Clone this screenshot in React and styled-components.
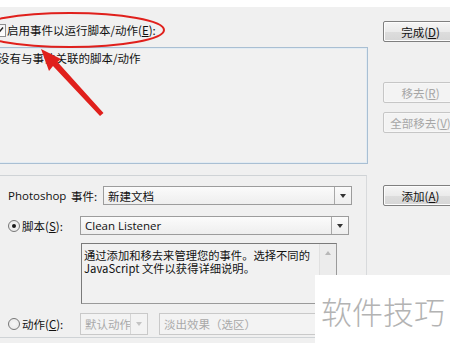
import React from "react";
import styled, { createGlobalStyle } from "styled-components";

const Global = createGlobalStyle`
  html, body { margin: 0; padding: 0; background: #f0f0f0; }
  body { overflow: hidden; }
  * { box-sizing: border-box; }
`;

const FONT = `"Noto Sans CJK SC", "Noto Sans", sans-serif`;
const LATIN = `"Open Sans", "Noto Sans CJK SC", sans-serif`;

const Page = styled.div`
  position: relative;
  width: 450px;
  height: 343px;
  overflow: hidden;
  background: #f0f0f0;
  font-family: ${FONT};
  font-size: 11.5px;
  color: #111;
`;

const TopBand = styled.div`
  height: 7px;
  background: #ffffff;
`;

const Dialog = styled.div`
  display: flex;
  gap: 15px;
  margin-left: -12px;
`;

const LeftCol = styled.div`
  width: 380px;
  flex: none;
  display: flex;
  flex-direction: column;
`;

const CheckRow = styled.label`
  display: flex;
  align-items: center;
  gap: 1px;
  height: 14px;
  margin-top: 16px;
  padding-left: 5px;
  line-height: 14px;
`;

const CheckBoxBox = styled.span`
  width: 13px;
  height: 13px;
  border: 1px solid #8e8f8f;
  background: linear-gradient(#f4f4f4, #ffffff);
  display: flex;
  align-items: center;
  justify-content: center;
`;

const U = styled.span`
  text-decoration: underline;
`;

const ListBox = styled.div`
  margin-top: 10px;
  height: 117px;
  border: 1px solid #a9bfd3;
  box-shadow: inset 0 0 0 1px #e3ecf3;
  background: #f1f1f1;
  padding: 3px 9px;
  line-height: 14px;
  white-space: nowrap;
`;

const GroupBox = styled.div`
  margin-top: 11px;
  margin-right: 1px;
  height: 163px;
  border: 1px solid #cfd3d6;
  border-right-color: #d8dadc;
  padding: 10px 0 0 19px;
  display: flex;
  flex-direction: column;
`;

const FormRow = styled.div`
  display: flex;
  align-items: center;
  height: ${(p) => p.$h || 19}px;
  margin-top: ${(p) => p.$mt || 0}px;
`;

const Label = styled.div`
  width: ${(p) => p.$w}px;
  flex: none;
  display: flex;
  align-items: center;
  gap: 2px;
  font-size: 11.5px;
  line-height: 14px;
  white-space: nowrap;
`;

const LatinWord = styled.span`
  font-family: ${LATIN};
  font-size: 11.5px;
`;

const Radio = styled.span`
  width: 12px;
  height: 12px;
  border-radius: 50%;
  border: 1px solid #777;
  background: radial-gradient(circle, #f6f6f6 0, #e6e6e6 100%);
  display: flex;
  align-items: center;
  justify-content: center;
  &::after {
    content: "";
    width: 4px;
    height: 4px;
    border-radius: 50%;
    background: ${(p) => (p.$on ? "#1a1a1a" : "transparent")};
  }
`;

const SelectBox = styled.div`
  width: ${(p) => p.$w}px;
  height: 100%;
  flex: none;
  display: flex;
  border: 1px solid ${(p) => (p.$disabled ? "#c9c9c9" : "#9c9c9c")};
  background: ${(p) =>
    p.$disabled ? "#f3f3f3" : "linear-gradient(#fbfbfb, #eeeeee)"};
  margin-left: ${(p) => p.$ml || 0}px;
  color: ${(p) => (p.$disabled ? "#a9a9a9" : "#111")};
`;

const SelectText = styled.div`
  flex: 1;
  padding-left: 4px;
  display: flex;
  align-items: center;
  white-space: nowrap;
  overflow: hidden;
  font-family: ${(p) => (p.$latin ? LATIN : FONT)};
  font-size: 11.5px;
`;

const SelectArrow = styled.div`
  width: 17px;
  flex: none;
  border-left: 1px solid ${(p) => (p.$disabled ? "#d5d5d5" : "#a8a8a8")};
  display: flex;
  align-items: center;
  justify-content: center;
  &::after {
    content: "";
    border-left: 3.5px solid transparent;
    border-right: 3.5px solid transparent;
    border-top: 4px solid ${(p) => (p.$disabled ? "#c4c4c4" : "#333")};
  }
`;

const TextArea = styled.div`
  margin-top: 8px;
  margin-left: 73px;
  width: 256px;
  height: 61px;
  border: 1px solid #7a7a7a;
  border-right-color: #9a9a9a;
  border-bottom-color: #9a9a9a;
  background: #f1f1f1;
  display: flex;
`;

const TAText = styled.div`
  flex: 1;
  padding: 5px 0 0 2px;
  font-size: 11.3px;
  line-height: 13px;
  color: #111;
  white-space: nowrap;
  overflow: hidden;
`;

const ScrollBar = styled.div`
  width: 17px;
  flex: none;
  background: #ececec;
  border-left: 1px solid #e0e0e0;
  display: flex;
  flex-direction: column;
`;

const ScrollBtn = styled.div`
  height: 17px;
  display: flex;
  align-items: center;
  justify-content: center;
  &::after {
    content: "";
    border-left: 3.5px solid transparent;
    border-right: 3.5px solid transparent;
    border-bottom: 4px solid #b8b8b8;
  }
`;

const RightCol = styled.div`
  width: 75px;
  flex: none;
  display: flex;
  flex-direction: column;
`;

const Button = styled.div`
  height: 21px;
  margin-top: ${(p) => p.$mt}px;
  border: 1px solid ${(p) => (p.$disabled ? "#c6c6c6" : "#7f7f7f")};
  border-radius: 2px;
  box-shadow: inset 0 0 0 1px ${(p) => (p.$disabled ? "#f7f7f7" : "#fcfcfc")};
  background: ${(p) =>
    p.$disabled
      ? "#f3f3f3"
      : "linear-gradient(#f5f5f5 0%, #ebebeb 50%, #dddddd 51%, #d6d6d6 100%)"};
  color: ${(p) => (p.$disabled ? "#a6a6a6" : "#111")};
  display: flex;
  align-items: center;
  justify-content: center;
  font-size: 11.5px;
  white-space: nowrap;
`;

const Overlay = styled.svg`
  position: absolute;
  left: 0;
  top: 0;
  width: 450px;
  height: 343px;
  pointer-events: none;
`;

const Watermark = styled.div`
  position: absolute;
  left: 315px;
  top: 275px;
  width: 135px;
  height: 68px;
  background: #ffffff;
  display: flex;
  align-items: center;
  padding-left: 6px;
  padding-top: 2px;
  font-weight: 300;
  font-size: 31px;
  color: #b3b3b3;
  white-space: nowrap;
`;

function Select({ w, text, disabled, latin, ml }) {
  return (
    <SelectBox $w={w} $disabled={disabled} $ml={ml}>
      <SelectText $latin={latin}>{text}</SelectText>
      <SelectArrow $disabled={disabled} />
    </SelectBox>
  );
}

export default function App() {
  return (
    <Page>
      <Global />
      <TopBand />
      <Dialog>
        <LeftCol>
          <CheckRow>
            <CheckBoxBox>
              <svg width="9" height="9" viewBox="0 0 9 9">
                <path d="M1 4.5 L3.5 7 L8 1.5" fill="none" stroke="#222" strokeWidth="1.4" />
              </svg>
            </CheckBoxBox>
            <span>
              启用事件以运行脚本/动作(<U>E</U>):
            </span>
          </CheckRow>
          <ListBox>没有与事件关联的脚本/动作</ListBox>
          <GroupBox>
            <FormRow>
              <Label $w={95}>
                <LatinWord>Photoshop</LatinWord>
                <span>&nbsp;事件:</span>
              </Label>
              <Select w={249} text="新建文档" />
            </FormRow>
            <FormRow $mt={11}>
              <Label $w={72}>
                <Radio $on />
                <span>
                  脚本(<U>S</U>):
                </span>
              </Label>
              <Select w={269} text="Clean Listener" latin />
            </FormRow>
            <TextArea>
              <TAText>
                通过添加和移去来管理您的事件。选择不同的
                <br />
                JavaScript 文件以获得详细说明。
              </TAText>
              <ScrollBar>
                <ScrollBtn />
              </ScrollBar>
            </TextArea>
            <FormRow $mt={9} $h={22}>
              <Label $w={72}>
                <Radio />
                <span>
                  动作(<U>C</U>):
                </span>
              </Label>
              <Select w={68} text="默认动作" disabled />
              <Select w={190} text="淡出效果（选区）" disabled ml={11} />
            </FormRow>
          </GroupBox>
        </LeftCol>
        <RightCol>
          <Button $mt={14}>
            完成(<U>D</U>)
          </Button>
          <Button $mt={40} $disabled>
            移去(<U>R</U>)
          </Button>
          <Button $mt={9} $disabled>
            全部移去(<U>V</U>)
          </Button>
          <Button $mt={52}>
            添加(<U>A</U>)
          </Button>
        </RightCol>
      </Dialog>
      <Overlay viewBox="0 0 450 343">
        <ellipse cx="70" cy="30" rx="94" ry="17" fill="none" stroke="#e0201c" strokeWidth="2" />
        <path d="M100 116 L103.5 113 L57.5 62 L61 59 L41 49 L49 71 L53 66 Z" fill="#e0201c" />
      </Overlay>
      <Watermark>软件技巧</Watermark>
    </Page>
  );
}
